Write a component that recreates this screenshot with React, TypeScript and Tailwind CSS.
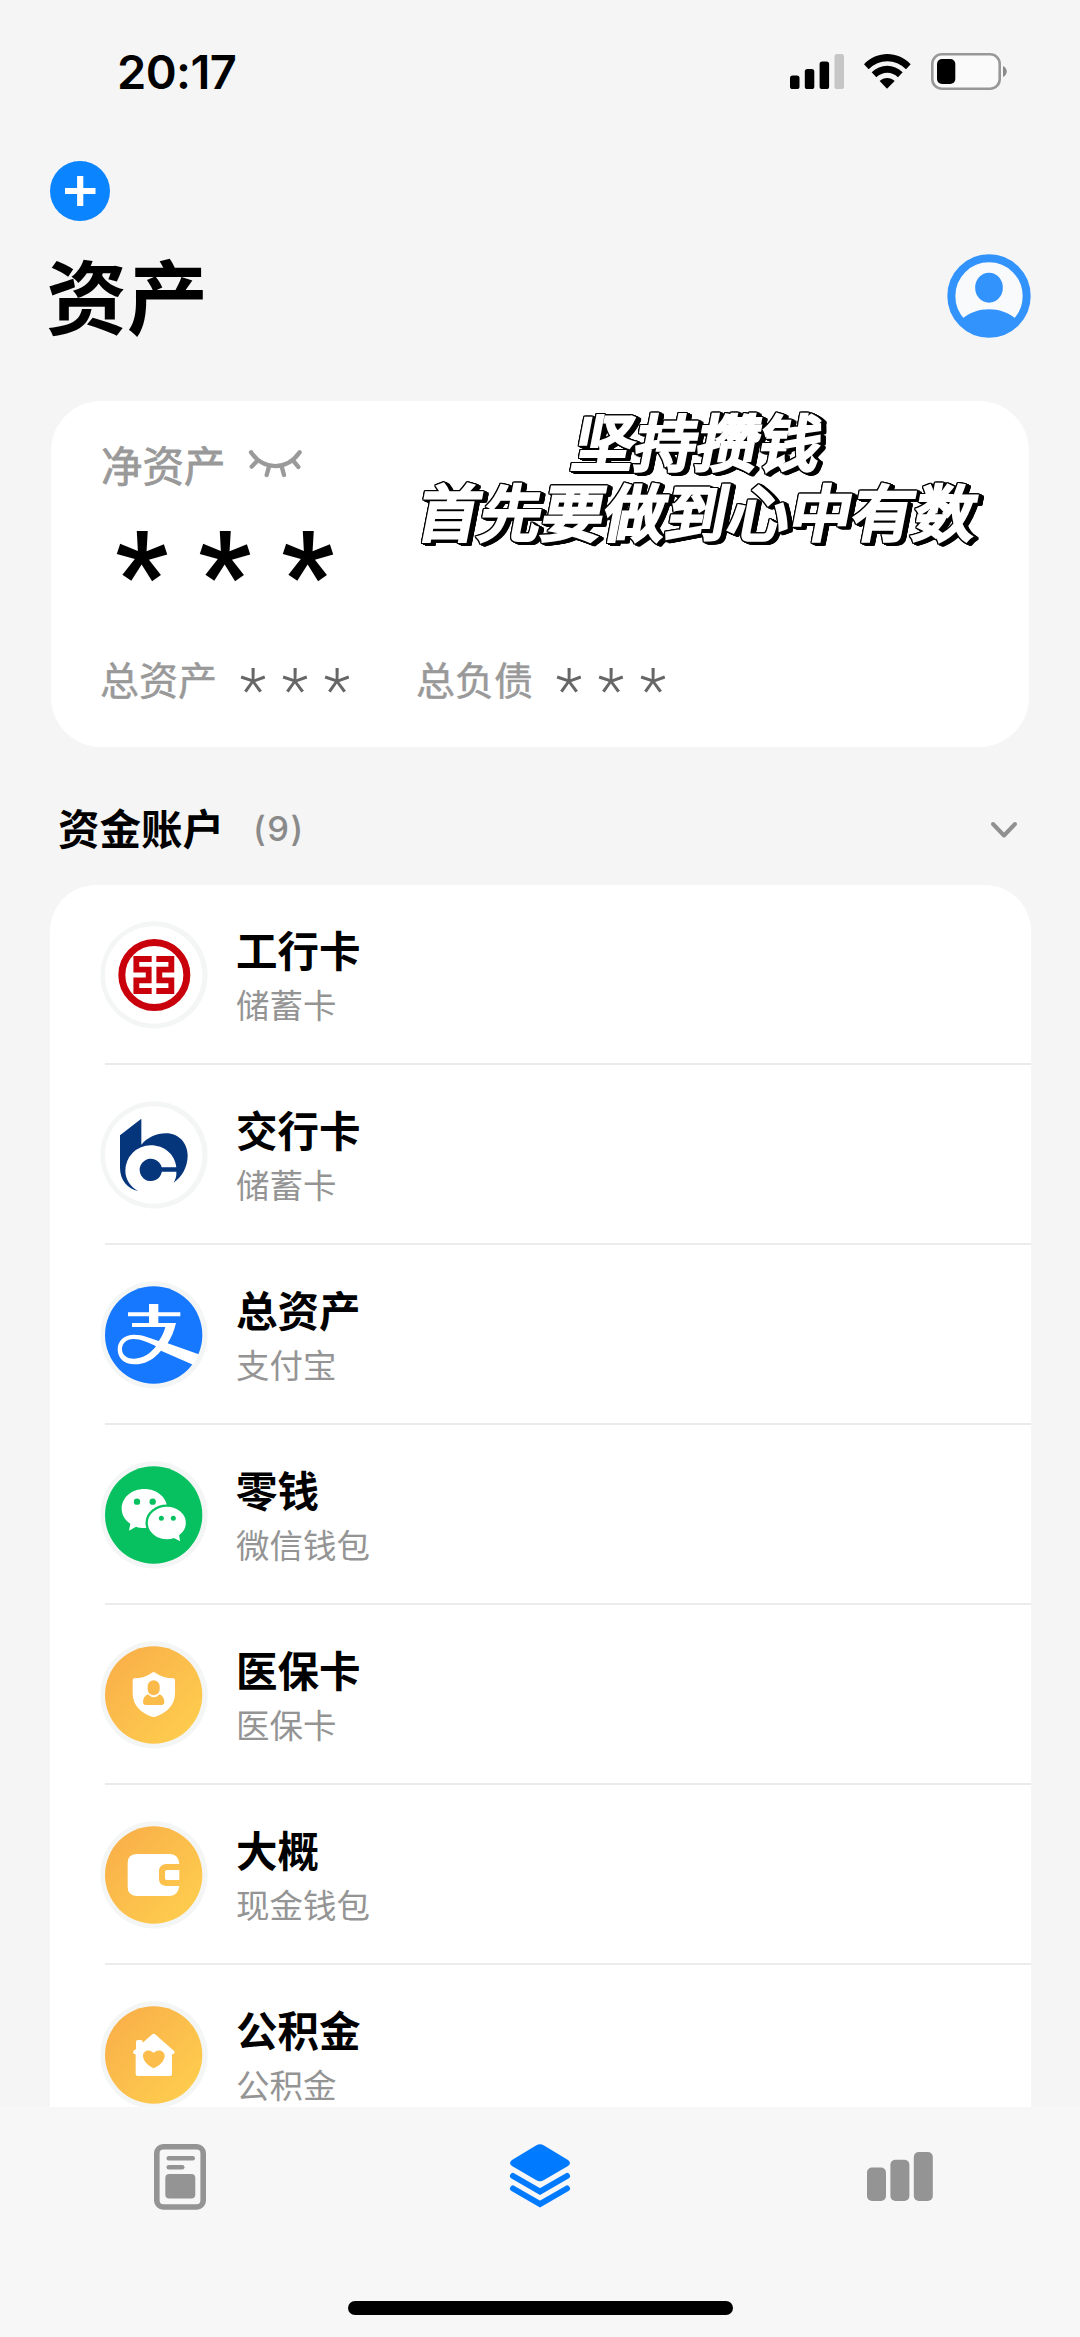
import React from "react";

const cjk = "font-['Noto_Sans_CJK_SC',sans-serif]";

function StatusBar() {
  return (
    <div className="flex h-[142px] shrink-0 items-start justify-between pt-[44px] pr-[72px] pl-[117px]">
      <div className="font-['Inter',sans-serif] text-[47px] leading-[56px] font-semibold tracking-[-0.6px]">20:17</div>
      <div className="flex pt-[9px]">
        <svg className="h-[37px] w-[54px]" viewBox="0 0 54 37">
          <rect x="0" y="22.5" width="9.5" height="13.5" rx="2.6" />
          <rect x="14.8" y="16" width="9.5" height="20" rx="2.6" />
          <rect x="29.6" y="8.6" width="9.5" height="27.4" rx="2.6" />
          <rect x="44.5" y="1" width="9.5" height="35" rx="2.6" fill="#c6c6c6" />
        </svg>
        <svg className="ml-[20px] h-[37px] w-[47px]" viewBox="373 159 141 111">
          <path d="M373 193C412 152 474 152 513 193L499 208C468 176 418 176 387 208Z" />
          <path d="M396 217C422 191 463 191 489 217L475 232C457 214 429 214 410 232Z" />
          <path d="M420 243C432 231 453 231 465 243L442 266Z" />
        </svg>
        <svg className="ml-[20px] h-[37px] w-[77px]" viewBox="0 0 77 37">
          <rect x="1.3" y="1.3" width="67.4" height="34.4" rx="9.5" fill="#fafafa" stroke="#989898" strokeWidth="2.6" />
          <rect x="6" y="6" width="18.3" height="25" rx="5" />
          <path d="M72 13C77 15.500 77 21.500 72 24Z" fill="#8a8a8a" />
        </svg>
      </div>
    </div>
  );
}

function Header() {
  return (
    <header className="flex h-[259px] shrink-0 flex-col pr-[49px] pl-[50px]">
      <svg className="mt-[19px] h-[60px] w-[60px]" viewBox="0 0 60 60">
        <circle cx="30" cy="30" r="30" fill="#0b84ff" />
        <path d="M15 30H45.500M30.200 15V45" stroke="#fff" strokeWidth="6.200" />
      </svg>
      <div className="mt-[24px] flex items-start justify-between">
        <h1 className="-ml-[4px] text-[81px] leading-[96px] font-bold">资产</h1>
        <svg className="mt-[9px] h-[84px] w-[84px]" viewBox="623 764 252 252">
          <circle cx="749" cy="890" r="113" fill="#f9fafb" stroke="#3293fc" strokeWidth="24" />
          <ellipse cx="749" cy="865" rx="41.500" ry="45" fill="#3293fc" />
          <path d="M668 959C712 920 786 920 830 959A110 110 0 0 1 668 959Z" fill="#3293fc" />
        </svg>
      </div>
    </header>
  );
}

function ClosedEye() {
  return (
    <svg className="h-[29.300px] w-[55px]" viewBox="625 188 165 88" fill="none" stroke="#9a9a9a" strokeWidth="13" strokeLinecap="round">
      <path d="M634 198C672 253 742 253 780 198M650 226L636 241M687 244L681 266M727 244L733 266M763 226L776 242" />
    </svg>
  );
}

function Stat({ label, className }: { label: string; className: string }) {
  return (
    <div className={`flex items-center ${className}`}>
      <span className="text-[39px] leading-[48px] text-[#999] [-webkit-text-stroke:0.5px_#999]">{label}</span>
      <span className="ml-[15px] flex font-['Roboto',sans-serif] font-light text-[#666]">
        {[0, 1, 2].map((i) => (
          <span key={i} className="w-[42px] text-center text-[62px] leading-[48px]">
            <span className="relative top-[13px]">*</span>
          </span>
        ))}
      </span>
    </div>
  );
}

function SummaryCard() {
  return (
    <section className="relative mx-[51px] h-[346px] shrink-0 rounded-[50px] bg-white">
      <div className="flex items-center pt-[37px] pl-[50px]">
        <span className="text-[41.500px] leading-[52px] text-[#999] [-webkit-text-stroke:0.8px_#999]">净资产</span>
        <span className="ml-[22px]">
          <ClosedEye />
        </span>
      </div>
      <div className="mt-[22px] flex h-[84px] pl-[49px] font-['Roboto',sans-serif]">
        {[0, 1, 2].map((i) => (
          <span key={i} className="w-[83px] text-center text-[116px] leading-[84px] font-bold">
            <span className="relative top-[20px]">*</span>
          </span>
        ))}
      </div>
      <div className="mt-[58px] flex pl-[49px]">
        <Stat label="总资产" className="w-[316px]" />
        <Stat label="总负债" className="w-[316px]" />
      </div>
      <div className="absolute top-[4px] left-[365px] flex w-[566px] flex-col items-center text-[61px] leading-[70px] font-normal tracking-[1px] whitespace-nowrap text-white [filter:drop-shadow(1px_0_0_#000)_drop-shadow(-1px_0_0_#000)_drop-shadow(0_1px_0_#000)_drop-shadow(0_-1px_0_#000)_drop-shadow(2px_1px_0_#000)_drop-shadow(2px_1px_0_#000)] [-webkit-text-stroke:4px_white]">
        <span className="-skew-x-[11deg]">坚持攒钱</span>
        <span className="-skew-x-[11deg]">首先要做到心中有数</span>
      </div>
    </section>
  );
}

function IconBase({ y, x = 60, fill, children }: { y: number; x?: number; fill: string; children: React.ReactNode }) {
  return (
    <svg className="h-[108px] w-[108px] shrink-0" viewBox={`${x} ${y} 324 324`}>
      <defs>
        <linearGradient id="amber" x1="0" y1="0" x2="1" y2="1">
          <stop offset="0.100" stopColor="#f9b049" />
          <stop offset="0.900" stopColor="#fecd4e" />
        </linearGradient>
      </defs>
      <circle cx={x + 162} cy={y + 162} r="161" fill="#f4f6f6" />
      <circle cx={x + 161} cy={y + 162} r="146" fill={fill} />
      {children}
    </svg>
  );
}

const amber = "url(#amber)";

function IcbcIcon() {
  return (
    <IconBase x={209} y={423} fill="#fff">
      <circle cx="372" cy="585" r="97.500" fill="none" stroke="#c9000b" strokeWidth="21" />
      <path d="M364 537H318V569H355V601H318V633H364M378 537H423V569H387V601H423V633H378" fill="none" stroke="#c9000b" strokeWidth="17.500" />
    </IconBase>
  );
}

function BocomIcon() {
  return (
    <IconBase y={62} fill="#fff">
      <path
        fill="#05367b"
        d="M120 165L184 115V193C202 172 228 159 258 159C298 159 323 190 323 225C323 262 305 290 281 307C287 296 290 286 289 274H245.500A33.500 33.500 0 1 1 245 261H289C285 222 253 195 212 195A76 76 0 0 0 136 271C136 297 152 320 175 332C143 325 120 300 120 262Z"
      />
    </IconBase>
  );
}

function AlipayIcon() {
  return (
    <IconBase y={603} fill="#1677ff">
      <path
        fill="#fff"
        fillRule="evenodd"
        d="M207 672H235V697H301V709H235V729H288C282 755 273 774 263 790L356 823C351 835 346 845 339 854L243 812C222 838 195 853 163 853C133 853 113 835 113 808C113 780 135 764 162 764C190 764 212 775 236 783C246 770 252 756 256 741H156V729H207V709H144V697H207ZM160 777C139 777 126 790 126 808C126 826 142 837 163 836C190 835 212 820 228 799C205 787 182 777 160 777Z"
      />
    </IconBase>
  );
}

function WechatIcon() {
  return (
    <IconBase y={182} fill="#07c160">
      <path fill="#fff" d="M193 266C231 266 262 292 262 325C262 358 231 383 193 383C184 383 176 382 168 379L147 391L151 370C135 359 125 343 125 325C125 292 155 266 193 266Z" />
      <path fill="#fff" stroke="#07c160" strokeWidth="7" d="M261 316C294 316 321 339 321 368C321 384 313 397 301 406L305 429L281 417C275 419 268 420 261 420C228 420 200 397 200 368C200 339 228 316 261 316Z" />
      <g fill="#07c160">
        <circle cx="171" cy="304" r="9.500" />
        <circle cx="218" cy="304" r="9.500" />
        <circle cx="244" cy="354" r="7.500" />
        <circle cx="280" cy="354" r="7.500" />
      </g>
    </IconBase>
  );
}

function ShieldIcon() {
  return (
    <IconBase y={723} fill={amber}>
      <path fill="#fff" d="M216 818Q221 814 226 818C242 829 260 835 280 835Q285 835 285 840V880C285 917 258 940 226 950Q221 952 216 950C184 940 158 917 158 880V840Q158 835 163 835C183 835 200 829 216 818Z" />
      <rect x="203" y="841" width="36" height="45" rx="18" fill="#fbba4a" />
      <path fill="#fbbd4a" d="M204 883Q221 901 239 883C248 887 253 896 253 906Q253 915 244 915H198Q189 915 189 906C189 896 194 887 204 883Z" />
    </IconBase>
  );
}

function WalletIcon() {
  return (
    <IconBase y={243} fill={amber}>
      <path
        fill="#fff"
        d="M169 342H270Q296 344 298 372H258Q237 374 237 395V417Q237 436 258 438H298Q294 467 270 468H169Q143 466 143 442V368Q143 344 169 342ZM260 390H298V420H260Q255 420 255 415V395Q255 390 260 390Z"
      />
    </IconBase>
  );
}

function HouseIcon() {
  return (
    <IconBase y={783} fill={amber}>
      <path fill="#fff" d="M215 884Q221 879 227 884L283 934Q286 943 276 943V1002Q276 1008 270 1008H173Q167 1008 167 1002V943Q157 943 160 933L168 927V905Q168 900 173 900H183Q188 900 188 905V908Z" />
      <path fill="#fcbd4a" d="M221 985C205 977 189 963 189 947C189 931 211 925 221 939C231 925 254 931 254 947C254 963 238 977 221 985Z" />
    </IconBase>
  );
}

const accounts = [
  { name: "工行卡", type: "储蓄卡", Icon: IcbcIcon },
  { name: "交行卡", type: "储蓄卡", Icon: BocomIcon },
  { name: "总资产", type: "支付宝", Icon: AlipayIcon },
  { name: "零钱", type: "微信钱包", Icon: WechatIcon },
  { name: "医保卡", type: "医保卡", Icon: ShieldIcon },
  { name: "大概", type: "现金钱包", Icon: WalletIcon },
  { name: "公积金", type: "公积金", Icon: HouseIcon },
];

function AccountList() {
  return (
    <section className="flex min-h-0 flex-1 flex-col">
      <div className="flex h-[138px] shrink-0 items-center justify-between pt-[26px] pr-[61px] pl-[58px]">
        <div className="flex items-center pb-[4px]">
          <h2 className="text-[41.500px] leading-[52px] font-bold">资金账户</h2>
          <span className="relative top-[2px] ml-[29px] font-['Inter',sans-serif] text-[34.500px] leading-[52px] font-medium tracking-[1.500px] text-[#8a8a8a]">(9)</span>
        </div>
        <svg className="mt-[2px] h-[20px] w-[30px]" viewBox="0 0 30 20" fill="none" stroke="#909090" strokeWidth="4" strokeLinecap="round" strokeLinejoin="round">
          <path d="M4 4L15 15.500L26 4" />
        </svg>
      </div>
      <div className="mr-[49px] ml-[50px] flex min-h-0 flex-1 flex-col overflow-hidden rounded-t-[46px] bg-white">
        {accounts.map(({ name, type, Icon }) => (
          <div key={name} className="flex h-[180px] shrink-0 flex-col pl-[50px]">
            <div className="flex flex-1 items-center pt-[2px]">
              <Icon />
              <div className="ml-[28px] flex flex-col">
                <span className="text-[41.500px] leading-[56px] font-bold">{name}</span>
                <span className="text-[33.500px] leading-[53px] text-[#949494]">{type}</span>
              </div>
            </div>
            <div className="ml-[5px] h-[2px] bg-[#ebebeb]" />
          </div>
        ))}
      </div>
    </section>
  );
}

function TabBar() {
  return (
    <nav className="flex h-[230px] shrink-0 flex-col items-center bg-[#f7f7f7]">
      <div className="grid h-[140px] w-full grid-cols-3 items-start justify-items-center pt-[37px]">
        <svg className="h-[66px] w-[52px]" viewBox="0 0 52 66" fill="#949494">
          <rect x="2.800" y="2.800" width="46.400" height="60.200" rx="6.500" fill="none" stroke="#949494" strokeWidth="5.600" />
          <rect x="12.500" y="12" width="28.500" height="4.600" rx="2.300" />
          <rect x="12.500" y="21" width="18" height="4.600" rx="2.300" />
          <rect x="11.300" y="30" width="30" height="24.500" rx="4" />
        </svg>
        <svg className="h-[66px] w-[62px]" viewBox="0 0 62 66" fill="#007aff">
          <path d="M27 1.500Q31 -1 35 1.500L59 16Q63 19 59 22L35 36Q31 38.500 27 36L3 22Q-1 19 3 16Z" />
          <path d="M4 32L31 47.500L58 32M4 44.500L31 60L58 44.500" fill="none" stroke="#007aff" strokeWidth="6" strokeLinecap="round" />
        </svg>
        <svg className="h-[66px] w-[66px]" viewBox="0 0 66 66" fill="#949494">
          <rect x="0" y="23.500" width="19" height="33.500" rx="5" />
          <rect x="23.400" y="15.800" width="19" height="41.200" rx="5" />
          <rect x="46.800" y="8" width="19" height="49" rx="5" />
        </svg>
      </div>
      <div className="mt-[54px] h-[14px] w-[385px] rounded-full bg-black" />
    </nav>
  );
}

export default function App() {
  return (
    <div className={`flex h-[2337px] w-[1080px] flex-col overflow-hidden bg-[#f5f5f5] text-black ${cjk}`}>
      <StatusBar />
      <Header />
      <SummaryCard />
      <AccountList />
      <TabBar />
    </div>
  );
}
